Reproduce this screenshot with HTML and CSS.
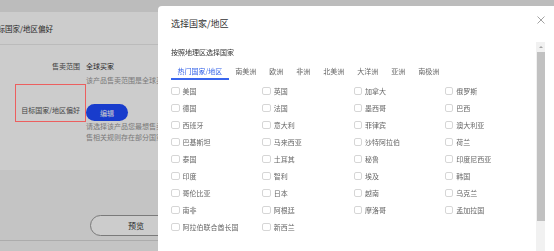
FILE: index.html
```html
<!DOCTYPE html>
<html lang="zh-CN">
<head>
    <meta charset="UTF-8">
    <meta name="viewport" content="width=device-width, initial-scale=1.0">
    <title>选择国家/地区</title>
    <link rel="stylesheet" href="styles.css">
</head>
<body>

<div class="page">
    <div class="topbar"></div>
    <div class="card">
        <div class="card-head"><span class="card-title">目标国家/地区偏好</span></div>
        <div class="form">
            <div class="form-row">
                <div class="form-label">售卖范围</div>
                <div class="form-value">
                    <div class="value-text">全球买家</div>
                    <div class="hint hint-single">该产品售卖范围是全球买</div>
                </div>
            </div>
            <div class="form-row">
                <div class="form-label highlight">目标国家/地区偏好</div>
                <div class="form-value">
                    <button class="btn-edit">编辑</button>
                    <div class="hint">请选择该产品您最想售卖</div>
                    <div class="hint">售相关规则存在部分国家</div>
                </div>
            </div>
        </div>
    </div>
    <div class="actions">
        <button class="btn-preview">预览</button>
    </div>
</div>

<div class="mask"></div>

<div class="modal">
    <div class="modal-head">
        <div class="modal-title">选择国家/地区</div>
        <svg class="modal-close" viewBox="0 0 8 8"><path d="M0.5 0.5 7.5 7.5 M7.5 0.5 0.5 7.5"/></svg>
    </div>
    <div class="modal-body">
        <div class="region-list">
            <div class="region-title">按照地理区选择国家</div>
            <div class="tabs">
                <span class="tab active">热门国家/地区</span>
                <span class="tab">南美洲</span>
                <span class="tab">欧洲</span>
                <span class="tab">非洲</span>
                <span class="tab">北美洲</span>
                <span class="tab">大洋洲</span>
                <span class="tab">亚洲</span>
                <span class="tab">南极洲</span>
            </div>
            <div class="country-grid">
                <label class="country"><span class="check"></span>美国</label>
                <label class="country"><span class="check"></span>英国</label>
                <label class="country"><span class="check"></span>加拿大</label>
                <label class="country"><span class="check"></span>俄罗斯</label>
                <label class="country"><span class="check"></span>德国</label>
                <label class="country"><span class="check"></span>法国</label>
                <label class="country"><span class="check"></span>墨西哥</label>
                <label class="country"><span class="check"></span>巴西</label>
                <label class="country"><span class="check"></span>西班牙</label>
                <label class="country"><span class="check"></span>意大利</label>
                <label class="country"><span class="check"></span>菲律宾</label>
                <label class="country"><span class="check"></span>澳大利亚</label>
                <label class="country"><span class="check"></span>巴基斯坦</label>
                <label class="country"><span class="check"></span>马来西亚</label>
                <label class="country"><span class="check"></span>沙特阿拉伯</label>
                <label class="country"><span class="check"></span>荷兰</label>
                <label class="country"><span class="check"></span>泰国</label>
                <label class="country"><span class="check"></span>土耳其</label>
                <label class="country"><span class="check"></span>秘鲁</label>
                <label class="country"><span class="check"></span>印度尼西亚</label>
                <label class="country"><span class="check"></span>印度</label>
                <label class="country"><span class="check"></span>智利</label>
                <label class="country"><span class="check"></span>埃及</label>
                <label class="country"><span class="check"></span>韩国</label>
                <label class="country"><span class="check"></span>哥伦比亚</label>
                <label class="country"><span class="check"></span>日本</label>
                <label class="country"><span class="check"></span>越南</label>
                <label class="country"><span class="check"></span>乌克兰</label>
                <label class="country"><span class="check"></span>南非</label>
                <label class="country"><span class="check"></span>阿根廷</label>
                <label class="country"><span class="check"></span>摩洛哥</label>
                <label class="country"><span class="check"></span>孟加拉国</label>
                <label class="country"><span class="check"></span>阿拉伯联合酋长国</label>
                <label class="country"><span class="check"></span>新西兰</label>
            </div>
        </div>
        <div class="scrollbar">
            <div class="scroll-up"></div>
            <div class="scroll-thumb"></div>
        </div>
    </div>
</div>

</body>
</html>
```

FILE: styles.css
```css
* {
    box-sizing: border-box;
}
body {
    margin: 0;
    width: 554px;
    height: 251px;
    overflow: hidden;
    font-family: "Noto Sans CJK SC", "Noto Sans", sans-serif;
    background-color: #f5f5f5;
    color: #333;
}
.topbar {
    height: 12px;
    background-color: #ebebeb;
}
.card {
    height: 158px;
    background-color: #fff;
}
.card-head {
    height: 33px;
    padding-top: 2px;
    display: flex;
    align-items: center;
    border-bottom: 1px solid #eaeaea;
}
.card-title {
    margin-left: -10px;
    font-size: 7.5px;
    line-height: 10px;
    white-space: nowrap;
}
.form {
    padding: 16px 0 0 15px;
}
.form-row {
    display: flex;
}
.form-label {
    width: 71px;
    flex-shrink: 0;
    padding-right: 6px;
    text-align: right;
    font-size: 7px;
    line-height: 10px;
    color: #555;
    white-space: nowrap;
}
.form-label.highlight {
    position: relative;
    height: 38px;
    padding-top: 21px;
}
/* annotation frame, drawn above the mask */
.highlight::after {
    content: '';
    position: absolute;
    top: 0;
    left: 0;
    right: 0;
    bottom: 0;
    border: 1px solid #ec5f5f;
    z-index: 3;
}
.form-value {
    font-size: 7px;
    white-space: nowrap;
}
.value-text {
    line-height: 10px;
    color: #333;
}
.hint {
    line-height: 10.5px;
    color: #999;
}
.hint-single {
    margin-top: 6px;
    line-height: 7px;
}
.btn-edit {
    display: block;
    margin-top: 20px;
    width: 42px;
    height: 17px;
    padding: 0;
    border: none;
    border-radius: 9px;
    background-color: #1f4bff;
    color: #fff;
    font-family: inherit;
    font-size: 7px;
}
.actions {
    height: 71px;
    padding: 40px 0 0 90px;
    border-bottom: 1px solid #d8d8d8;
}
.btn-preview {
    width: 92px;
    height: 21px;
    padding: 0;
    border: 1px solid #999;
    border-radius: 11px;
    background-color: #fff;
    color: #333;
    font-family: inherit;
    font-size: 8px;
}
.mask {
    position: fixed;
    top: 0;
    left: 0;
    right: 0;
    bottom: 0;
    background-color: rgba(0, 0, 0, 0.2);
    z-index: 1;
}
.modal {
    position: fixed;
    left: 158px;
    top: 6px;
    width: 404px;
    bottom: -10px;
    background-color: #fff;
    border-radius: 4px;
    z-index: 2;
    display: flex;
    flex-direction: column;
}
.modal-head {
    height: 36px;
    flex-shrink: 0;
    display: flex;
    justify-content: space-between;
    align-items: flex-start;
    padding: 12px 17px 0 13px;
}
.modal-title {
    font-size: 9px;
    line-height: 12px;
    color: #333;
}
.modal-close {
    width: 8px;
    height: 8px;
    margin-top: -2px;
    fill: none;
    stroke: #999;
    stroke-width: 0.9;
}
.modal-body {
    flex: 1;
    min-height: 0;
    display: flex;
    padding: 0 17px 0 13px;
}
.region-list {
    flex: 1;
    padding-top: 5px;
}
.region-title {
    font-size: 7px;
    line-height: 10px;
    color: #333;
}
.tabs {
    display: flex;
    margin-top: 9px;
}
.tab {
    padding: 0 6.5px 2px;
    border-bottom: 2px solid transparent;
    font-size: 7px;
    line-height: 10px;
    color: #666;
    white-space: nowrap;
}
.tab.active {
    color: #2f5fe8;
    border-bottom-color: #3865ee;
}
.country-grid {
    display: grid;
    grid-template-columns: repeat(4, 1fr);
    grid-auto-rows: 17px;
    margin-top: 2.5px;
}
.country {
    display: flex;
    align-items: center;
    gap: 3px;
    font-size: 7px;
    color: #666;
    white-space: nowrap;
}
.check {
    width: 8.5px;
    height: 8.5px;
    border: 1px solid #d6d6d6;
    border-radius: 2px;
    background-color: #fff;
}
.scrollbar {
    width: 9px;
    flex-shrink: 0;
    background-color: #f1f1f1;
    display: flex;
    flex-direction: column;
    align-items: flex-end;
}
.scroll-up {
    width: 9px;
    height: 10px;
    display: flex;
    align-items: center;
    justify-content: center;
}
.scroll-up::before {
    content: '';
    border-left: 2px solid transparent;
    border-right: 2px solid transparent;
    border-bottom: 2px solid #a3a3a3;
}
.scroll-thumb {
    width: 8px;
    height: 169px;
    background-color: #c1c1c1;
}
```
